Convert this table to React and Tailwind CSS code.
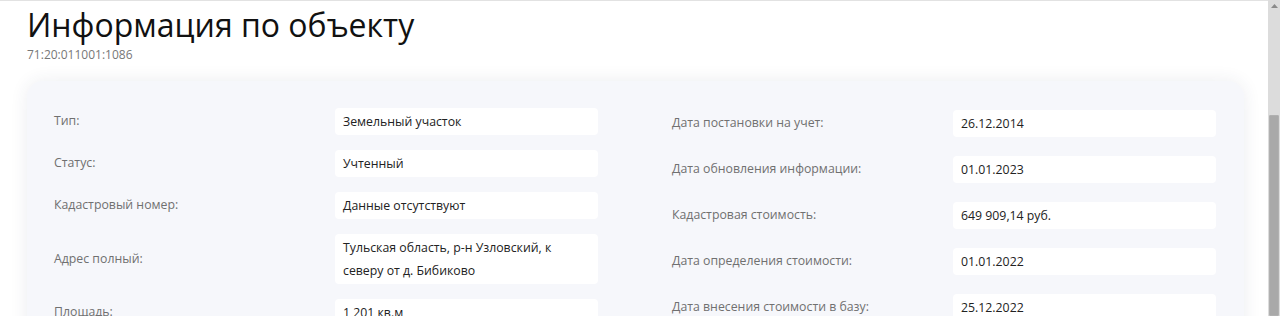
const left = [
	{ label: "Тип:", value: ["Земельный участок"] },
	{ label: "Статус:", value: ["Учтенный"] },
	{ label: "Кадастровый номер:", value: ["Данные отсутствуют"] },
	{ label: "Адрес полный:", value: ["Тульская область, р-н Узловский, к", "северу от д. Бибиково"] },
	{ label: "Площадь:", value: ["1 201 кв.м"] },
];

const right = [
	{ label: "Дата постановки на учет:", value: ["26.12.2014"] },
	{ label: "Дата обновления информации:", value: ["01.01.2023"] },
	{ label: "Кадастровая стоимость:", value: ["649 909,14 руб."] },
	{ label: "Дата определения стоимости:", value: ["01.01.2022"] },
	{ label: "Дата внесения стоимости в базу:", value: ["25.12.2022"] },
];

const Row = ({ label, value }) => (
	<div className="flex items-center">
		<div className="w-[281px] shrink-0 text-[12.3px] text-[#707070]">{label}</div>
		<div className="w-[263px] bg-white rounded-[4px] px-2 py-[2px] text-[12.3px] leading-[23px] text-[#222]">
			{value.map((line) => (
				<div key={line}>{line}</div>
			))}
		</div>
	</div>
);

const App = () => {
	return (
		<div className="flex h-[316px] w-[1280px] overflow-hidden bg-white font-['Open_Sans',sans-serif]">
			<div className="flex-1 border-t border-[#e2e2e2] pl-[27px] pr-[24px]">
				{/* Header */}
				<h1 className="mt-[2px] text-[32px] leading-[44px] text-[#111]">Информация по объекту</h1>
				<div className="text-[12px] leading-[16px] text-[#777]">71:20:011001:1086</div>

				{/* Card */}
				<div className="mt-[18px] rounded-[16px] bg-[#f6f7fb] shadow-[0_0_18px_rgba(40,50,90,0.09)] px-[27px] pt-[27px] pb-6">
					<div className="grid grid-cols-[544px_544px] gap-x-[74px]">
						<div className="flex flex-col gap-[15px]">
							{left.map((r) => (
								<Row key={r.label} {...r} />
							))}
						</div>
						<div className="flex flex-col gap-[19px] pt-[2px]">
							{right.map((r) => (
								<Row key={r.label} {...r} />
							))}
						</div>
					</div>
				</div>
			</div>

			{/* Scrollbar */}
			<div className="flex w-[12px] shrink-0 flex-col bg-[#dcdcdc]">
				<div className="flex h-[12px] items-center justify-center">
					<svg width="7" height="4" viewBox="0 0 7 4">
						<path d="M0 4 L3.5 0 L7 4 Z" fill="#8a8a8a" />
					</svg>
				</div>
				<div className="mt-[103px] mx-[1px] flex-1 rounded-[1px] border border-[#b0b0b0] bg-[#a9a9a9]" />
			</div>
		</div>
	);
};

export default App;
